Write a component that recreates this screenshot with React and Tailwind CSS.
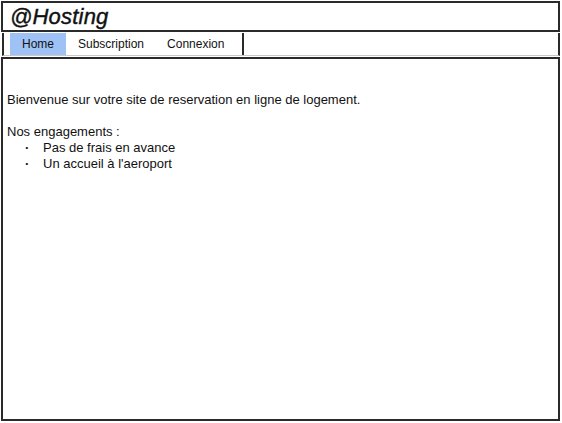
import React from 'react';

const font = { fontFamily: '"Liberation Sans", Arial, sans-serif' };

export default function App() {
  const tabs = ['Home', 'Subscription', 'Connexion'];

  return (
    <div className="w-[562px] h-[423px] bg-white flex flex-col text-[#111]" style={font}>
      <div className="mt-[1px] ml-[1px] mr-[2px] h-[31px] border-2 border-[#2a2a2a] flex items-center pl-[7px]">
        <span className="text-[22px] italic leading-none tracking-[0.2px] [-webkit-text-stroke:0.4px_#111]">@Hosting</span>
      </div>

      <div className="mt-[1px] ml-[2px] mr-[2px] h-[23px] flex border-l-2 border-r-2 border-[#2a2a2a] border-b border-b-[#c8c8c8]">
        <div className="flex h-full ml-[6px] border-r-2 border-[#2a2a2a]">
          {tabs.map((t, i) => (
            <div
              key={t}
              className={
                'h-full flex items-center text-[12px] ' +
                (i === 0 ? 'bg-[#9ec2f5] px-[12px] w-[56px]' : i === 1 ? 'px-[12px]' : 'pl-[11px] pr-[18px]')
              }
            >
              {t}
            </div>
          ))}
        </div>
      </div>

      <div className="mt-[1px] ml-[1px] mr-[2px] mb-[2px] flex-1 border-2 border-[#2a2a2a] pt-[33px] pl-[4px] text-[13px] leading-[16px]">
        <p>Bienvenue sur votre site de reservation en ligne de logement.</p>
        <p className="mt-[16px]">Nos engagements :</p>
        <ul className="pl-[18px]">
          <li className="flex">
            <span className="w-[18px] font-bold">·</span>Pas de frais en avance
          </li>
          <li className="flex">
            <span className="w-[18px] font-bold">·</span>Un accueil à l'aeroport
          </li>
        </ul>
      </div>
    </div>
  );
}
